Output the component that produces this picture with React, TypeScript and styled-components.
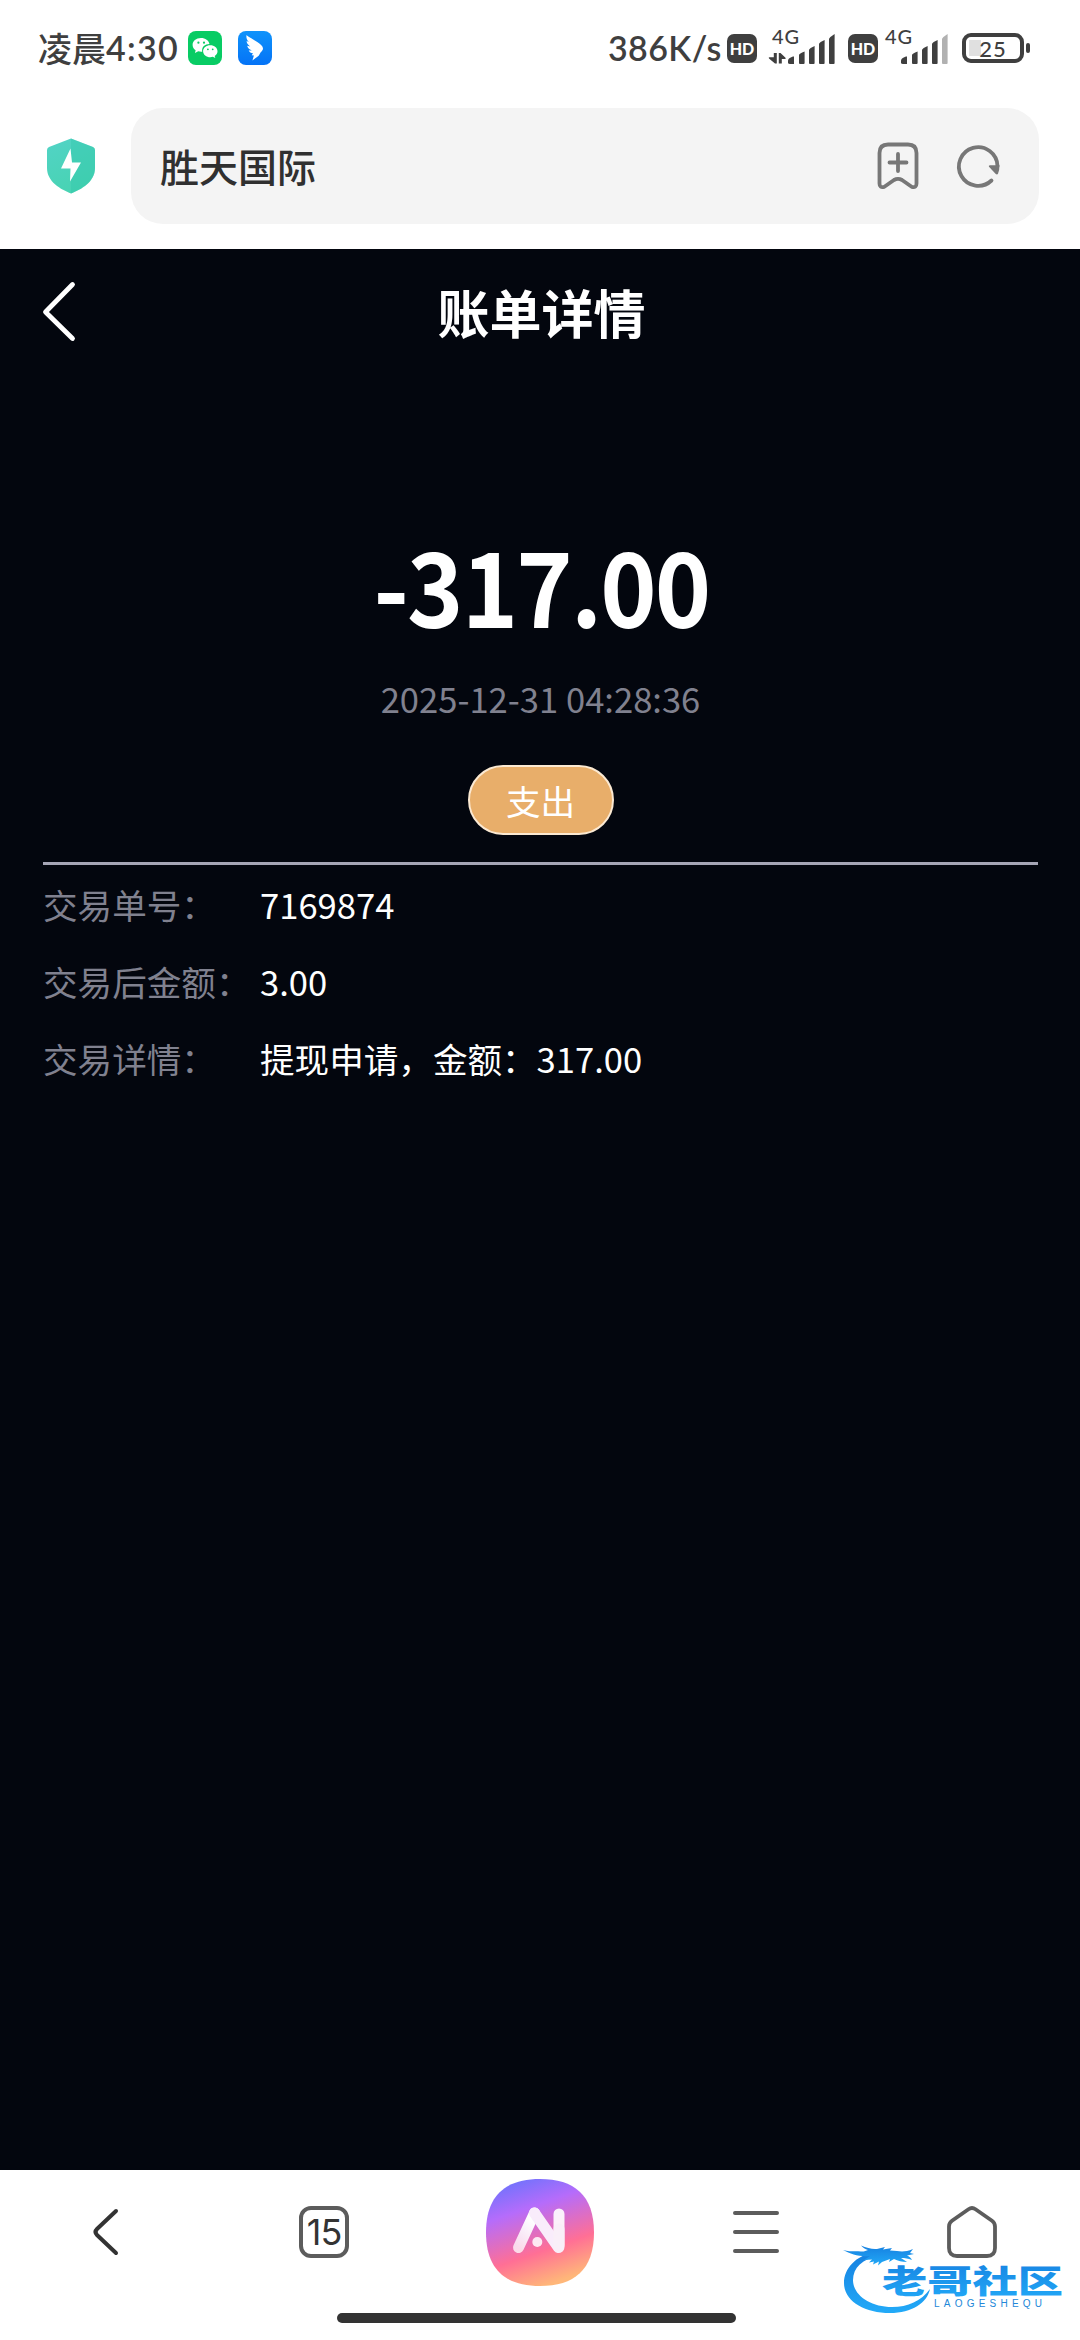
import * as React from 'react';
import styled, { createGlobalStyle } from 'styled-components';

const ink = '#3f3f3f';
const navGrey = '#5c5c5c';
const pageBackground = '#03060e';
const muted = '#80818f';
const cjk = "'Noto Sans CJK SC', sans-serif";

const details = [
	{ label: '交易单号：', value: '7169874' },
	{ label: '交易后金额：', value: '3.00' },
	{ label: '交易详情：', value: '提现申请，金额：317.00' }
];

const WeChatIcon = () => (
	<svg width="34" height="34" viewBox="0 0 34 34">
		<rect width="34" height="34" rx="8" fill="#08cc64" />
		<path
			d="M13 7C8 7 4.600 10 4.600 13.900c0 2.200 1.200 4 3 5.300L7 22l3.200-1.700c1.200.4 2.600.5 4 .4C13.500 15.800 17 13 21.500 13 20.700 9.500 17.400 7 13 7Z"
			fill="#fff"
		/>
		<path
			d="M22.300 14.200c-4 0-7.200 2.600-7.200 6s3.200 6 7.200 6c.9 0 1.800-.1 2.500-.4l2.500 1.300-.6-2.200c1.700-1.100 2.800-2.800 2.800-4.700 0-3.400-3.200-6-7.200-6Z"
			fill="#fff"
		/>
		<g fill="#08cc64">
			<circle cx="10.400" cy="11.700" r="1.100" />
			<circle cx="16" cy="11.700" r="1.100" />
			<circle cx="19.900" cy="18.300" r=".9" />
			<circle cx="24.700" cy="18.300" r=".9" />
		</g>
	</svg>
);

const WingIcon = () => (
	<svg width="34" height="34" viewBox="0 0 34 34">
		<defs>
			<linearGradient id="wing" x1="0" y1="0" x2="0" y2="1">
				<stop offset="0" stopColor="#0f93fb" />
				<stop offset="1" stopColor="#0573f6" />
			</linearGradient>
		</defs>
		<rect width="34" height="34" rx="8" fill="url(#wing)" />
		<path
			d="M8.500 4c.8 1.500 9.500 5.500 13.500 9 2.600 2.200 3.500 4 2.700 5.800-.6 1.300-2.200 2.500-2.700 3.700l-1.300 2.300-6.300 4.700 1.500-5-2.200-.2 1.300-2c-2.200-.3-3.600-1.300-4.300-2.900 1.300.2 2.300.1 3-.2-2.700-.8-4-2.300-4.500-4.400l3 .6c-2.600-1.700-3.500-3.300-3.600-5.300l2.300.9C8.700 8.600 8.100 6.600 8.500 4Z"
			fill="#fff"
		/>
	</svg>
);

const Signal = ({ data, weak }: { data?: boolean; weak?: boolean }) => (
	<svg width="66" height="34" viewBox="0 0 66 34">
		{data && (
			<g fill={ink}>
				<path d="M3.800 22h3v10.500H5L-1 27.500q-.8-1.200.6-1.200h4.200Z" />
				<path d="M8.800 22h1.700l5 4.700q.8 1.300-.6 1.300h-3.100v4.500h-3Z" />
			</g>
		)}
		<g fill={ink}>
			<path d="M18 29.500c0-2 4-4 6-4V33h-4q-2 0-2-1.500Z" />
			<path d="M29 24q0-1.200 5.600-3.500V32q0 1-1 1h-3.600q-1 0-1-1Z" />
			<path d="M39 19q0-1.500 5.600-4V32q0 1-1 1H40q-1 0-1-1Z" />
			<path d="M49 13q0-1.500 5.600-4V32q0 1-1 1H50q-1 0-1-1Z" />
			<path d="M59 8q0-1.500 5.600-5V32q0 1-1 1H60q-1 0-1-1Z" fill={weak ? '#b1b1b1' : ink} />
		</g>
	</svg>
);

const ShieldIcon = () => (
	<svg width="48" height="56" viewBox="0 0 48 56">
		<defs>
			<linearGradient id="shield" x1="0" y1="0" x2=".4" y2="1">
				<stop offset="0" stopColor="#52d3c6" />
				<stop offset="1" stopColor="#48d3b3" />
			</linearGradient>
		</defs>
		<path d="M24 .5 46 9q2 .8 2 3v18c0 14-14 21.500-24 25.500C14 51.500 0 44 0 30V12q0-2.200 2-3Z" fill="url(#shield)" />
		<path d="M24 .5 46 9q2 .8 2 3v18c0 14-14 21.500-24 25.500Z" fill="#2fc7a8" opacity=".35" />
		<path d="M23.500 10.500 14 30.500h9.500L23 43.500 34 24.500h-9Z" fill="#fff" />
	</svg>
);

const BookmarkIcon = () => (
	<svg width="42" height="48" viewBox="0 0 42 48" fill="none" stroke="#777" strokeWidth="3.800" strokeLinecap="round" strokeLinejoin="round">
		<path d="M2.500 11q0-8.500 8.500-8.500h20q8.500 0 8.500 8.500v30.500q0 4.500-4.500 3.500L25 38q-4-2.400-8 0L7 45q-4.500 1-4.500-3.500Z" />
		<path d="M12.500 20.500h17M21 12v17" />
	</svg>
);

const RefreshIcon = () => (
	<svg width="46" height="46" viewBox="0 0 46 46">
		<path d="M35.500 37.500A19.300 19.300 0 1 1 41.500 23" fill="none" stroke="#777" strokeWidth="3.800" strokeLinecap="round" />
		<path d="M34 22.200h9.500q0 5-1.500 8.500-1 1.500-2.500 0l-6.500-7q-.8-1.500 1-1.500Z" fill="#777" />
	</svg>
);

const AiIcon = () => (
	<svg width="108" height="107" viewBox="0 0 108 107">
		<defs>
			<linearGradient id="ai" x1=".2" y1="0" x2=".55" y2="1">
				<stop offset="0" stopColor="#6a73fc" />
				<stop offset=".3" stopColor="#b56cfb" />
				<stop offset=".7" stopColor="#ff6f95" />
				<stop offset="1" stopColor="#ffb779" />
			</linearGradient>
			<linearGradient id="leg" x1="0" y1="1" x2=".4" y2="0">
				<stop offset="0" stopColor="#fff" stopOpacity=".75" />
				<stop offset="1" stopColor="#fff" />
			</linearGradient>
		</defs>
		<path d="M54 0c34 0 54 16 54 53.500S88 107 54 107 0 91 0 53.500 20 0 54 0Z" fill="url(#ai)" />
		<g fill="none" strokeWidth="11" strokeLinecap="round" strokeLinejoin="round">
			<path d="M73 35v31" stroke="#fff" strokeOpacity=".9" />
			<path d="M32.500 68.500 48.500 34" stroke="url(#leg)" />
			<path d="M48.500 34 72.500 68.500" stroke="#f9ecfb" />
			<path d="M73 50v18" stroke="#f9eff8" />
		</g>
		<circle cx="51.300" cy="63" r="5" fill="#fff" fillOpacity=".85" />
	</svg>
);

const HomeIcon = () => (
	<svg width="50" height="52" viewBox="0 0 50 52" fill="none" stroke={navGrey} strokeWidth="3.800" strokeLinejoin="round">
		<path d="M2 20.500q0-3.500 3-5.700L21.500 3.200q3.500-2.400 7 0L45 14.800q3 2.200 3 5.700V42q0 8-8 8H10q-8 0-8-8Z" />
	</svg>
);

const CommunityLogo = () => (
	<svg width="222" height="74" viewBox="0 0 222 74">
		<defs>
			<linearGradient id="brand" x1="0" y1="0" x2="0" y2="1">
				<stop offset="0" stopColor="#1680e0" />
				<stop offset="1" stopColor="#22aaf8" />
			</linearGradient>
		</defs>
		<g fill="url(#brand)">
			<path d="M32 11C14 15 2 27 2 42c0 18 20 30 46 30 22 0 37-10 40-24-9 12-22 18-38 18-22 0-39-12-39-27 0-12 9-21 27-25Z" />
			<path d="M1 9c7 2 12 1 18 1.500 3 .2 5-.5 7-1.500-3-1-5-2-7-4.500 6 2.500 11 4 16 3.500l8-2-2 2.500 9-1.500-2 2.500 7 .5c4 .5 9 1 16-2l-3 4 4 1-7 1.500c2 1 4 2 5 4.500-4-1.500-7-2-11-2l6 4c-5 0-9-1-13-3l-5 3 1-3-8 3-4 3.500 1-4-6 3 1-3-5 1 3-3-8 .5 6-4C17 16 9 13 1 9Z" />
		</g>
		<LogoName x="40" y="52" textLength="181" lengthAdjust="spacingAndGlyphs">
			老哥社区
		</LogoName>
		<LogoLatin x="92" y="65.500" textLength="108">
			LAOGESHEQU
		</LogoLatin>
	</svg>
);

const App = () => (
	<Phone>
		<GlobalStyle />
		<StatusBar>
			<Clock>
				凌晨<span>4:30</span>
			</Clock>
			<WeChatIcon />
			<WingIcon />
			<StatusRight>
				<Speed>386K/s</Speed>
				<HdBadge>HD</HdBadge>
				<SignalGroup>
					<Network>4G</Network>
					<Signal data />
				</SignalGroup>
				<HdBadge>HD</HdBadge>
				<SignalGroup $tight>
					<Network>4G</Network>
					<Signal weak />
				</SignalGroup>
				<Battery>25</Battery>
			</StatusRight>
		</StatusBar>
		<AddressBar>
			<ShieldIcon />
			<AddressField>
				<SiteName>胜天国际</SiteName>
				<BookmarkIcon />
				<RefreshIcon />
			</AddressField>
		</AddressBar>
		<Page>
			<TitleBar>
				<svg width="34" height="62" viewBox="0 0 34 62" fill="none" stroke="#fff" strokeWidth="4.800" strokeLinecap="round" strokeLinejoin="round">
					<path d="M29.500 3.500 2.500 31l27 26.500" />
				</svg>
				<h1>账单详情</h1>
			</TitleBar>
			<Summary>
				<Amount>-317.00</Amount>
				<Time>2025-12-31 04:28:36</Time>
				<Kind>支出</Kind>
			</Summary>
			<DetailList>
				{details.map((item) => (
					<DetailRow key={item.label}>
						<dt>{item.label}</dt>
						<dd>{item.value}</dd>
					</DetailRow>
				))}
			</DetailList>
		</Page>
		<BottomBar>
			<NavItem>
				<BackArrow width="26" height="48" viewBox="0 0 26 48" fill="none" stroke="#333" strokeWidth="4" strokeLinecap="round">
					<path d="M23 3 4 21q-3 3 0 6l19 18" />
				</BackArrow>
			</NavItem>
			<NavItem>
				<TabCount>15</TabCount>
			</NavItem>
			<NavItem>
				<AiIcon />
			</NavItem>
			<NavItem>
				<svg width="46" height="42" viewBox="0 0 46 42" stroke={navGrey} strokeWidth="4" strokeLinecap="round">
					<path d="M2 2h42M2 21h42M2 40h42" />
				</svg>
			</NavItem>
			<NavItem>
				<HomeIcon />
			</NavItem>
			<HomeIndicator />
			<Watermark>
				<CommunityLogo />
			</Watermark>
		</BottomBar>
	</Phone>
);

const GlobalStyle = createGlobalStyle`
	* {
		box-sizing: border-box;
	}
	body {
		margin: 0;
		background: #fff;
	}
	svg {
		display: block;
		flex: none;
		overflow: visible;
	}
`;

const Phone = styled.div`
	width: 1080px;
	height: 2340px;
	display: flex;
	flex-direction: column;
	overflow: hidden;
	font-family: ${cjk};
`;

const StatusBar = styled.header`
	height: 97px;
	display: flex;
	align-items: center;
	gap: 16px;
	padding: 0 50px 1px 38px;
	color: ${ink};
`;

const Clock = styled.div`
	display: flex;
	align-items: center;
	width: 134px;
	font-size: 34px;
	font-weight: 500;
	line-height: 40px;
	white-space: nowrap;
	span {
		font: 600 34px/40px Lato, sans-serif;
		letter-spacing: 1.3px;
	}
`;

const StatusRight = styled.div`
	margin-left: auto;
	display: flex;
	align-items: center;
`;

const Speed = styled.div`
	width: 119px;
	font: 600 34px/40px Lato, sans-serif;
	letter-spacing: 0.4px;
`;

const HdBadge = styled.div`
	width: 30px;
	height: 29px;
	border-radius: 7px;
	background: ${ink};
	color: #fff;
	text-align: center;
	font: 900 16px/29px Lato, sans-serif;
`;

const SignalGroup = styled.div<{ $tight?: boolean }>`
	position: relative;
	margin-left: ${(props) => (props.$tight ? '5px' : '13px')};
	margin-right: ${(props) => (props.$tight ? '13px' : '12px')};
`;

const Network = styled.span`
	position: absolute;
	left: 2px;
	top: -6px;
	font: 500 20px/22px Lato, sans-serif;
	letter-spacing: 0.8px;
`;

const Battery = styled.div`
	position: relative;
	width: 62px;
	height: 30px;
	margin-right: 6px;
	border: 4px solid ${ink};
	border-radius: 9px;
	background: linear-gradient(#e0e0e0, #e0e0e0) 3px 3px / 12px 16px no-repeat;
	text-align: center;
	font: 500 22px/23px Lato, sans-serif;
	letter-spacing: 1px;
	&::after {
		content: '';
		position: absolute;
		right: -10px;
		top: 6px;
		width: 4px;
		height: 10px;
		border-radius: 2px;
		background: ${ink};
	}
`;

const AddressBar = styled.div`
	height: 152px;
	display: flex;
	align-items: center;
	gap: 36px;
	padding: 0 41px 14px 47px;
`;

const AddressField = styled.div`
	flex: 1;
	height: 116px;
	display: flex;
	align-items: center;
	gap: 37px;
	padding: 0 37px 0 29px;
	border-radius: 32px;
	background: #f4f4f4;
`;

const SiteName = styled.div`
	flex: 1;
	padding-bottom: 3px;
	color: #303030;
	font-size: 39px;
	font-weight: 500;
`;

const Page = styled.main`
	flex: 1;
	padding: 0 42px 0 43px;
	background: ${pageBackground};
	color: #fff;
`;

const TitleBar = styled.div`
	height: 125px;
	display: flex;
	align-items: center;
	padding-right: 32px;
	h1 {
		flex: 1;
		margin: 0;
		text-align: center;
		font-size: 52px;
		font-weight: 700;
	}
`;

const Summary = styled.section`
	display: flex;
	flex-direction: column;
	align-items: center;
	height: 491px;
	padding-top: 134px;
	border-bottom: 3px solid #a5a5b5;
`;

const Amount = styled.div`
	padding-left: 3px;
	font-size: 104px;
	font-weight: 700;
	line-height: 150px;
	letter-spacing: -2px;
	transform: scaleX(0.92);
`;

const Time = styled.time`
	margin-top: 15px;
	color: ${muted};
	font-size: 34.6px;
	line-height: 50px;
`;

const Kind = styled.div`
	width: 146px;
	height: 70px;
	margin-top: 42px;
	border: 2px solid #fbe9d2;
	border-radius: 35px;
	background: #e8ae6a;
	text-align: center;
	font-size: 34.6px;
	line-height: 66px;
`;

const DetailList = styled.dl`
	margin: 0;
`;

const DetailRow = styled.div`
	display: flex;
	height: 77px;
	align-items: center;
	font-size: 34.6px;
	white-space: nowrap;
	dt {
		width: 217px;
		color: ${muted};
	}
	dd {
		margin: 0;
	}
`;

const BottomBar = styled.footer`
	position: relative;
	height: 170px;
	display: flex;
	align-items: flex-start;
	background: #fff;
`;

const NavItem = styled.div`
	width: 216px;
	height: 124px;
	display: flex;
	align-items: center;
	justify-content: center;
`;

const BackArrow = styled.svg`
	margin-right: 4px;
`;

const TabCount = styled.div`
	width: 50px;
	height: 52px;
	border: 4px solid ${navGrey};
	border-radius: 12px;
	color: #333;
	text-align: center;
	font: 400 36px/44px Inter, sans-serif;
	letter-spacing: -1px;
`;

const HomeIndicator = styled.div`
	position: absolute;
	left: 337px;
	bottom: 17px;
	width: 399px;
	height: 10px;
	border-radius: 5px;
	background: #333;
`;

const Watermark = styled.div`
	position: absolute;
	left: 842px;
	bottom: 25px;
`;

const LogoName = styled.text`
	font: 900 32px ${cjk};
	fill: url(#brand);
`;

const LogoLatin = styled.text`
	font: 400 10px 'Liberation Sans', sans-serif;
	fill: #2387d8;
`;

export default App;
